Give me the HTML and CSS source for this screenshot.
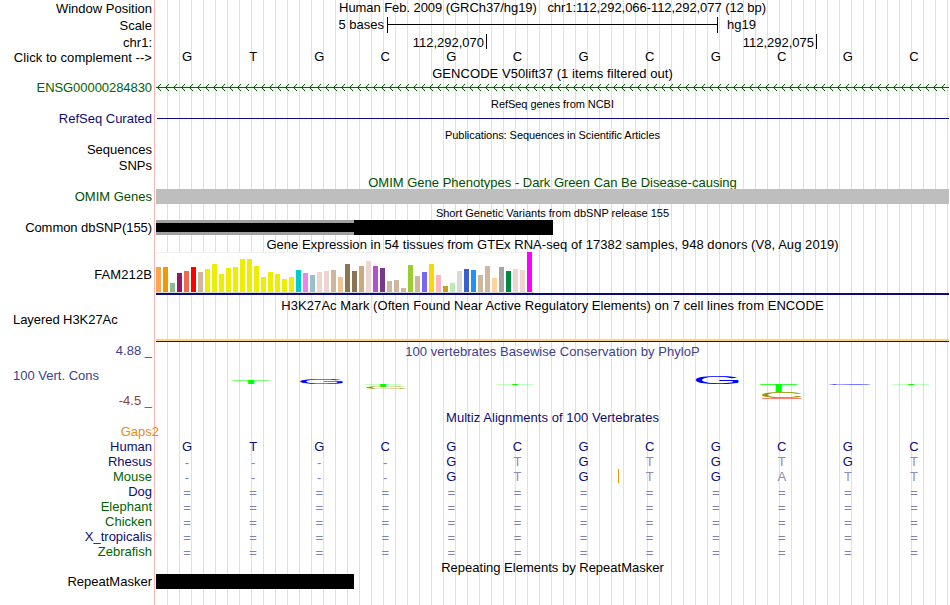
FILE: index.html
```html
<!DOCTYPE html>
<html lang="en">
<head>
<meta charset="utf-8">
<title>Genome Browser</title>
<link rel="stylesheet" href="styles.css">
</head>
<body>
<main class="browser">
  <div class="row h17"><div class="label low">Window Position</div><div class="data"><div class="title tight">Human Feb. 2009 (GRCh37/hg19) &nbsp; chr1:112,292,066-112,292,077 (12 bp)</div></div></div>
  <div class="row h17"><div class="label low">Scale</div><div class="data scale"><span class="scale-text">5 bases</span><span class="scale-bar"></span><span class="assembly">hg19</span></div></div>
  <div class="row h15"><div class="label low">chr1:</div><div class="data ruler"><span class="tick">112,292,070</span><span class="tick">112,292,075</span></div></div>
  <div class="row h17"><div class="label low loose">Click to complement --&gt;</div><div class="data"><div class="bases" data-seq="GTGCGCGCGCGC"></div></div></div>

  <div class="row h14"><div class="label"></div><div class="data title loose">GENCODE V50lift37 (1 items filtered out)</div></div>
  <div class="row h15"><div class="label green tight">ENSG00000284830</div><div class="data"><svg class="strand" width="793" height="15" shape-rendering="crispEdges">
    <defs><pattern id="arrow" width="8" height="15" patternUnits="userSpaceOnUse"><path d="M2 6h1v1h-1zM3 5h1v1h-1zM4 4h1v1h-1zM2 8h1v1h-1zM3 9h1v1h-1zM4 10h1v1h-1z" fill="#006400"/></pattern></defs>
    <rect width="793" height="15" fill="url(#arrow)"/><rect y="7" width="793" height="1" fill="#006400"/></svg></div></div>

  <div class="row h16"><div class="label"></div><div class="data title small tight">RefSeq genes from NCBI</div></div>
  <div class="row h15"><div class="label navy">RefSeq Curated</div><div class="data"><div class="refseq-line"></div></div></div>

  <div class="row h16"><div class="label"></div><div class="data title small tight">Publications: Sequences in Scientific Articles</div></div>
  <div class="row h16"><div class="label">Sequences</div></div>
  <div class="row h17"><div class="label">SNPs</div></div>

  <div class="row h14"><div class="label"></div><div class="data title omim">OMIM Gene Phenotypes - Dark Green Can Be Disease-causing</div></div>
  <div class="row h15"><div class="label omim">OMIM Genes</div><div class="data"><div class="omim-bar"></div></div></div>

  <div class="row h16"><div class="label"></div><div class="data title small">Short Genetic Variants from dbSNP release 155</div></div>
  <div class="row h15"><div class="label tight">Common dbSNP(155)</div><div class="data variants"><div class="partial"></div><div class="solid"></div></div></div>

  <div class="row h17"><div class="label"></div><div class="data title gtex-title loose">Gene Expression in 54 tissues from GTEx RNA-seq of 17382 samples, 948 donors (V8, Aug 2019)</div></div>
  <div class="row h43"><div class="label gtex-label">FAM212B</div><div class="data expression"><div class="chart" id="chart"></div><div class="gene-line"></div></div></div>

  <div class="row h14 after-gtex"><div class="label"></div><div class="data title loose">H3K27Ac Mark (Often Found Near Active Regulatory Elements) on 7 cell lines from ENCODE</div></div>
  <div class="row h29"><div class="label wide tight">Layered H3K27Ac</div><div class="data histone"><div class="signal"></div></div></div>

  <div class="row h69"><div class="label cons"><span class="high">4.88 _</span><span class="name">100 Vert. Cons</span><span class="low-score">-4.5 _</span></div>
    <div class="data conservation"><div class="title phylo loose">100 vertebrates Basewise Conservation by PhyloP</div>
    <svg class="logo" width="793" height="30" viewBox="156 374 793 30" font-family="Liberation Sans, sans-serif" font-size="100">
      <g fill="#00ff00">
        <text transform="translate(230.9 384) scale(.656 .058)">T</text>
        <text transform="translate(362.9 387) scale(.656 .044)">T</text>
        <text transform="translate(494.9 385) scale(.656 .015)">T</text>
        <text transform="translate(758.6 392) scale(.66 .116)">T</text>
        <text transform="translate(890.9 385) scale(.656 .015)">T</text>
      </g>
      <g fill="#0000ff">
        <text transform="translate(296.7 384) scale(.651 .07)">G</text>
        <text transform="translate(692.5 384) scale(.651 .112)">G</text>
        <text transform="translate(825.8 385) scale(.632 .014)">G</text>
      </g>
      <g fill="#999900">
        <text transform="translate(362.9 389) scale(.63 .028)">C</text>
        <text transform="translate(758.9 398) scale(.63 .085)">C</text>
      </g>
      <rect x="762" y="398" width="39" height="1" fill="#ff8070"/>
    </svg></div></div>

  <div class="row h14"><div class="label"></div><div class="data title navy loose">Multiz Alignments of 100 Vertebrates</div></div>
  <div class="row h15"><div class="label gaps">Gaps2</div></div>
  <div class="row h15"><div class="label navy">Human</div><div class="data"><div class="bases navy" data-seq="GTGCGCGCGCGC"></div></div></div>
  <div class="row h15"><div class="label navy">Rhesus</div><div class="data"><div class="bases navy" data-seq="----GtGtGtGt"></div></div></div>
  <div class="row h15"><div class="label green">Mouse</div><div class="data"><div class="bases navy" data-seq="----GtGtGatt"></div><i class="insert"></i></div></div>
  <div class="row h15"><div class="label navy">Dog</div><div class="data"><div class="bases navy" data-seq="============"></div></div></div>
  <div class="row h15"><div class="label green">Elephant</div><div class="data"><div class="bases navy" data-seq="============"></div></div></div>
  <div class="row h15"><div class="label green">Chicken</div><div class="data"><div class="bases navy" data-seq="============"></div></div></div>
  <div class="row h15"><div class="label navy">X_tropicalis</div><div class="data"><div class="bases navy" data-seq="============"></div></div></div>
  <div class="row h15"><div class="label green">Zebrafish</div><div class="data"><div class="bases navy" data-seq="============"></div></div></div>

  <div class="row repeat-title"><div class="label"></div><div class="data title">Repeating Elements by RepeatMasker</div></div>
  <div class="row h15"><div class="label">RepeatMasker</div><div class="data"><div class="repeat-bar"></div></div></div>
</main>
<script src="tracks.js"></script>
</body>
</html>
```
FILE: styles.css
```css
* { box-sizing: border-box; }
body { margin: 0; background: #fff; }
.browser {
  width: 949px;
  height: 605px;
  overflow: hidden;
  color: #000;
  font: 13px/15px "Liberation Sans", Arial, sans-serif;
  background:
    linear-gradient(#ffb4b4, #ffb4b4) 154px 0 / 1px 100% no-repeat,
    repeating-linear-gradient(90deg, transparent 0 11px, #dcdcff 11px 12px) 156px 0 / 793px 100% no-repeat;
}
.row { display: grid; grid-template-columns: 152px 793px; column-gap: 4px; white-space: nowrap; }
.h14 { height: 14px; }
.h15 { height: 15px; }
.h16 { height: 16px; }
.h17 { height: 17px; }
.h29 { height: 29px; }
.h43 { height: 43px; }
.h69 { height: 69px; }
.label { text-align: right; }
.low { padding-top: 1px; }
.data { min-width: 0; height: 100%; }
.title { text-align: center; }
.small { font-size: 11px; line-height: 16px; padding-top: 1px; }
.tight { letter-spacing: -0.06px; }
.loose { letter-spacing: 0.055px; }
.green { color: #006400; }
.navy { color: #0c0c78; }
.omim { color: #005000; }

.scale { display: flex; }
.scale-text { width: 231px; padding-right: 3px; text-align: right; }
.scale-bar {
  width: 331px;
  height: 16px;
  border: solid #000;
  border-width: 0 1px;
  background: linear-gradient(#000, #000) 0 7px / 100% 1px no-repeat;
}
.assembly { padding-left: 9px; }
.ruler { display: flex; }
.tick { width: 331px; height: 15px; padding: 1px 2px 0 0; text-align: right; border-right: 1px solid #000; }
.tick + .tick { width: 330px; }

.bases { display: grid; grid-template-columns: repeat(12, 1fr); width: 793px; margin-left: -2px; text-align: center; }
.mismatch { color: #8c8cbe; }
.unaligned { color: #8080b4; padding-top: 1px; }
.strand { display: block; }
.refseq-line { height: 1px; margin: 7px 0 0 1px; background: #0c0c78; }
.omim-bar { height: 15px; background: #bebebe; }
.variants { display: flex; }
.partial { width: 198px; border: solid #a0a0a0; border-width: 3px 0; background: #000; }
.solid { width: 199px; background: #000; }

.gtex-title { padding-top: 2px; }
.gtex-label { padding-top: 15px; letter-spacing: 0.1px; }
.chart {
  display: flex;
  align-items: flex-end;
  gap: 2px;
  width: 378px;
  height: 41px;
  background: #fff;
  box-shadow: inset 0 1px #f0f0f0;
  border-bottom: 1px solid #d8d8d8;
}
.bar { width: 5px; }
.gene-line { height: 2px; background: #0c0c78; }
.after-gtex { margin-top: 3px; }
.label.wide { text-align: left; padding-left: 13px; }
.histone { padding-top: 26px; }
.signal { height: 4px; border-bottom: 1px solid #3c0a1e; background: linear-gradient(transparent 1px, #ffd278 1px); }

.cons { display: flex; flex-direction: column; padding-top: 2px; }
.high { color: #40408c; }
.name { color: #40408c; text-align: left; padding-left: 13px; margin-top: 10px; }
.low-score { color: #8c4040; margin-top: 10px; }
.conservation { padding-top: 3px; }
.phylo { color: #40408c; }
.logo { display: block; margin-top: 15px; }

.label.gaps { color: #e68c0f; margin-right: -7px; }
.insert { display: block; position: relative; z-index: 1; width: 1px; height: 14px; margin: -16px 0 0 462px; background: #ee9600; }
.repeat-title { margin-top: 1px; height: 14px; }
.repeat-bar { width: 198px; height: 15px; background: #000; }
```
FILE: tracks.js
```js
// Nucleotide rows: lower case is a base that differs from human.
document.querySelectorAll(".bases").forEach(function (row) {
  Array.from(row.dataset.seq).forEach(function (base) {
    const cell = document.createElement("span");
    cell.textContent = base.toUpperCase();
    if (/[a-z]/.test(base)) cell.className = "mismatch";
    if (base === "-" || base === "=") cell.className = "unaligned";
    row.append(cell);
  });
});

// Median expression per tissue: [height, colour].
const yellow = [23, 28, 18, 24, 25, 33, 33, 26, 15, 20, 18, 13, 15].map(h => [h, "#eeee00"]);
const tissues = [
  [25, "#ffa54f"], [25, "#ee9a00"], [9, "#8fbc8f"], [19, "#8b1c62"], [21, "#ee6a50"], [25, "#ff0000"], [20, "#cdb79e"],
  ...yellow,
  [22, "#00cdcd"], [19, "#ee82ee"], [17, "#9ac0cd"], [20, "#eed5d2"], [21, "#eed5d2"], [22, "#cdb79e"], [15, "#eec591"],
  [28, "#8b7355"], [21, "#8b7355"], [26, "#cdaa7d"], [31, "#eed5d2"], [26, "#b452cd"], [24, "#7a378b"], [11, "#cdb79e"],
  [12, "#cdb79e"], [4, "#cdb79e"], [27, "#9acd32"], [16, "#cdb79e"], [20, "#7a67ee"], [28, "#ffd700"], [17, "#ffb6c1"],
  [6, "#cd9b1d"], [9, "#b4eeb4"], [21, "#d9d9d9"], [23, "#3a5fcd"], [22, "#1e90ff"], [17, "#cdb79e"], [26, "#cdb79e"],
  [14, "#ffd39b"], [25, "#a6a6a6"], [21, "#008b45"], [23, "#eed5d2"], [22, "#eed5d2"], [40, "#ff00ff"]
];
const chart = document.getElementById("chart");
tissues.forEach(function ([height, colour]) {
  const bar = document.createElement("div");
  bar.className = "bar";
  bar.style.height = height + "px";
  bar.style.background = colour;
  chart.append(bar);
});
```
